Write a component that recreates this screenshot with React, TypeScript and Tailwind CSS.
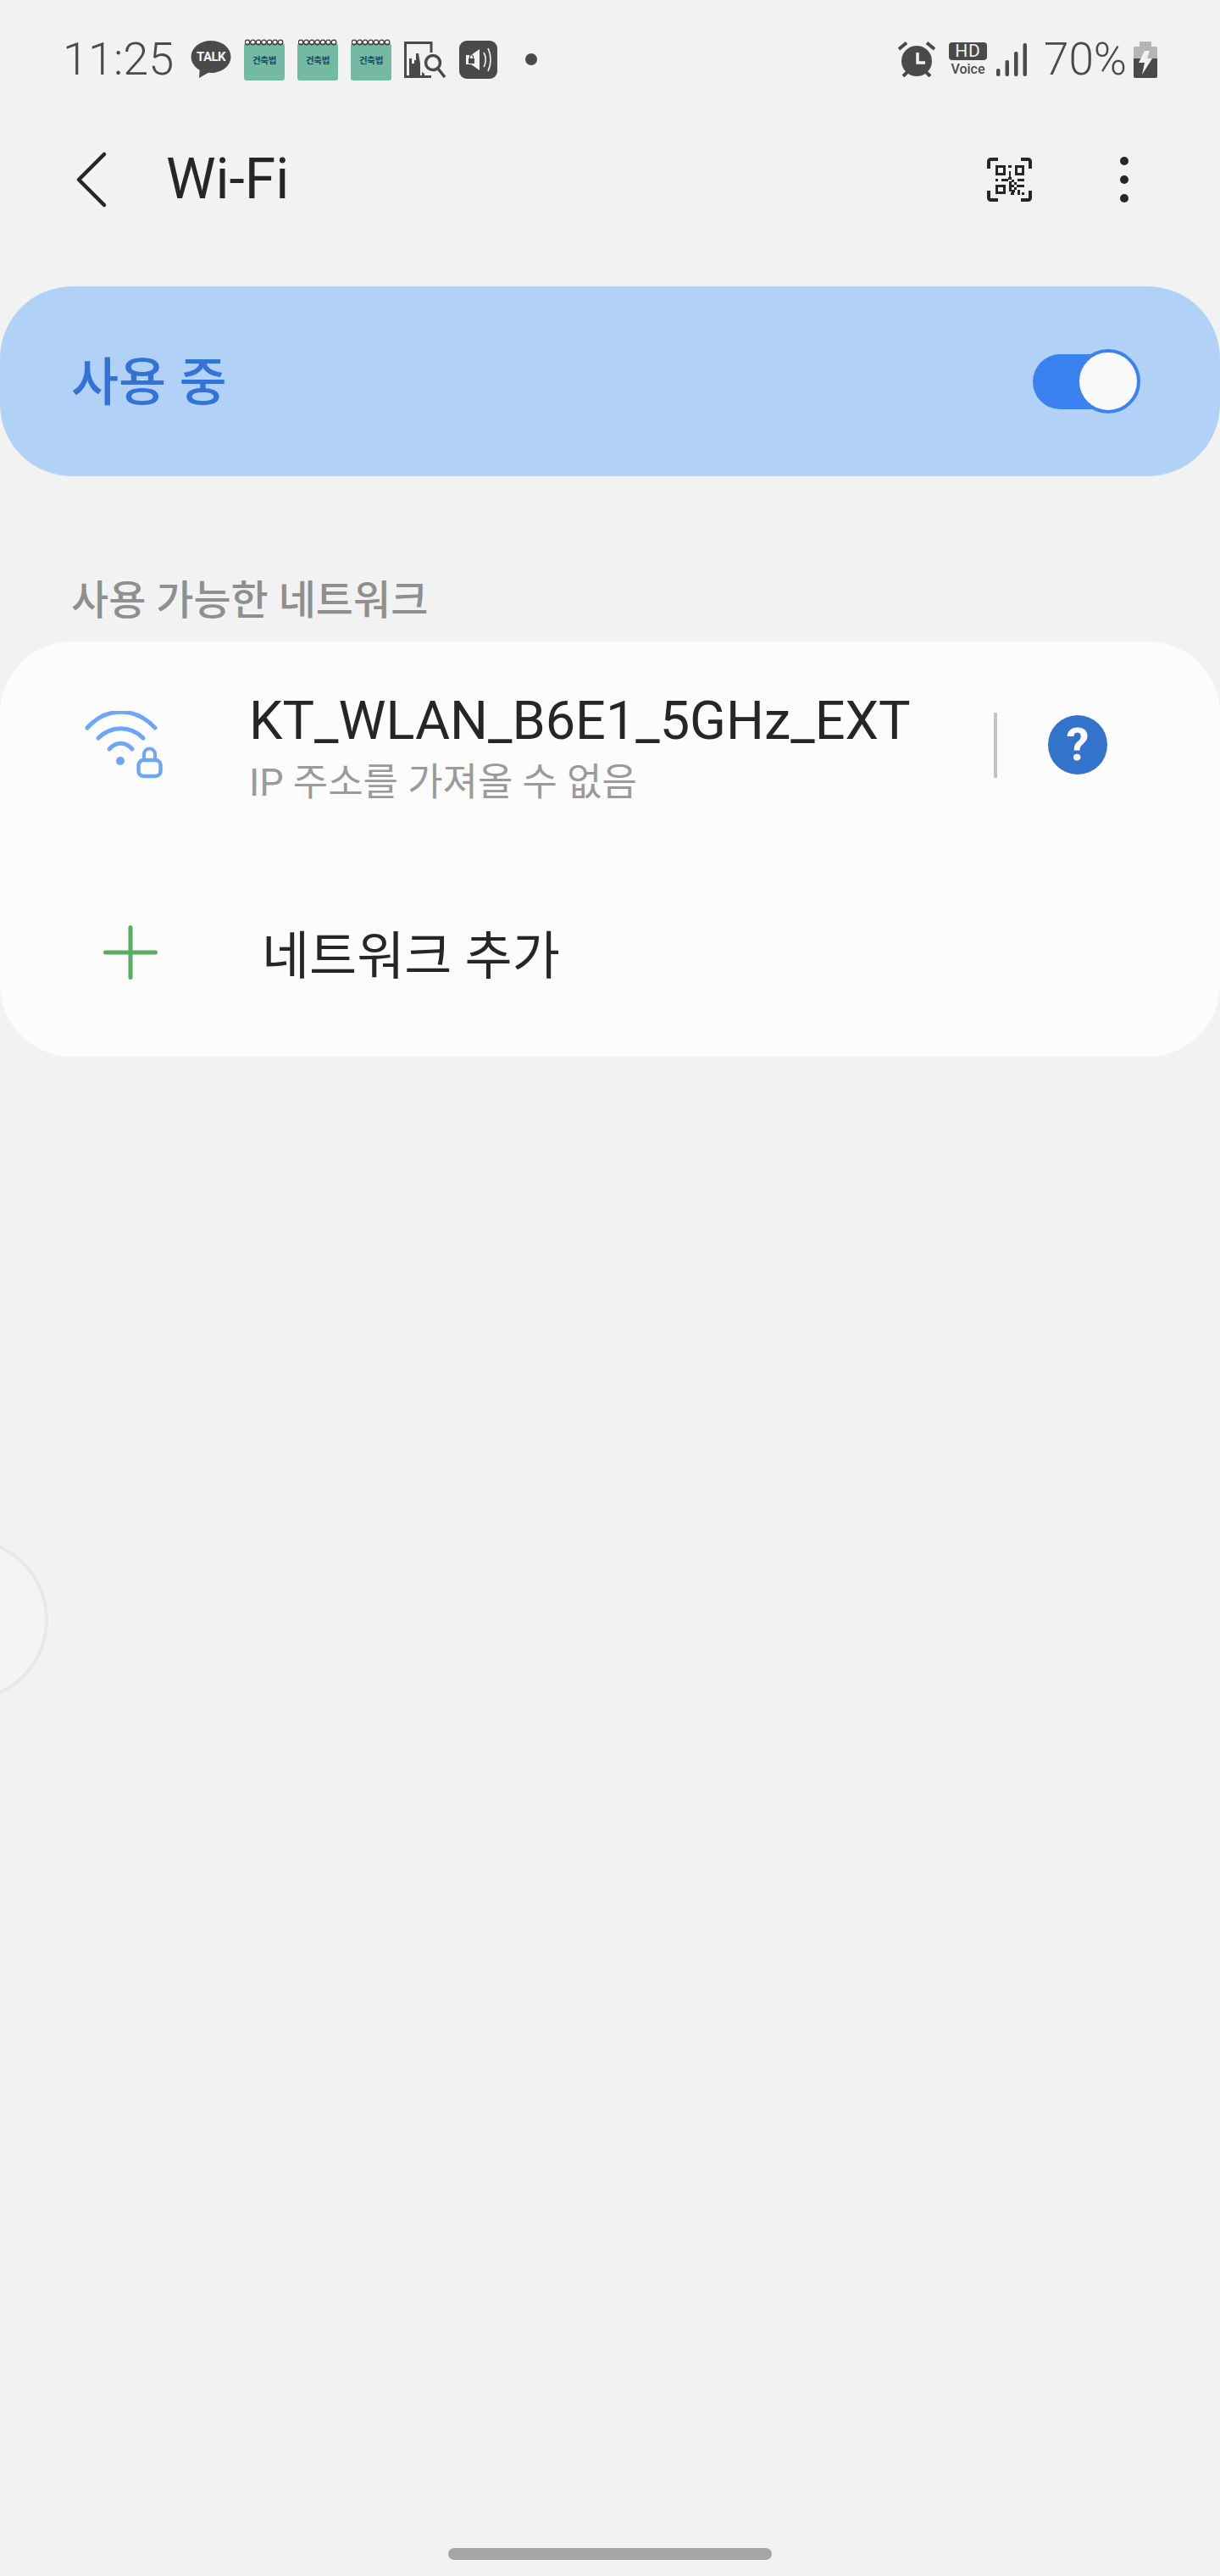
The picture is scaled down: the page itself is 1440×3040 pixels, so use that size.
const Notebook = () => (
  <div className="relative w-[48px] h-[49px] ml-[15px] first:ml-0">
    <div className="absolute left-0 right-0 top-[5px] bottom-0 rounded-[3px] bg-[#74b9a2]" />
    <svg className="absolute left-[1px] top-0" width="46" height="9" viewBox="0 0 46 9" fill="none">
      {[3, 9.5, 16, 22.5, 29, 35.5, 42].map((x) => (
        <circle key={x} cx={x} cy="4" r="2.8" stroke="#3a3a3a" strokeWidth="1.3" />
      ))}
    </svg>
    <span className="absolute inset-x-0 top-[18px] text-center text-[10.5px] leading-[15px] font-bold text-[#1c3f6e] tracking-[-0.3px]">
      건축법
    </span>
  </div>
);

const TalkIcon = () => (
  <div className="relative w-[48px] h-[44px]">
    <svg width="48" height="44" viewBox="0 0 48 44" fill="#4a4a4a">
      <ellipse cx="24" cy="19" rx="23.5" ry="19" />
      <path d="M11 30 L10 44 L24 36 Z" />
    </svg>
    <span className="absolute inset-x-0 top-[11px] text-center text-[15px] leading-[16px] font-bold text-[#f4f4f4] tracking-[-0.6px]">
      TALK
    </span>
  </div>
);

const ChartSearchIcon = () => (
  <svg width="50" height="43" viewBox="0 0 50 43" fill="none" className="ml-[15px]">
    <path d="M32 13V1.5H1.5V41.5H32" stroke="#4a4a4a" strokeWidth="3" />
    <path d="M6 42V20h3v6h3v-4l2 0v-8h3l2 12v16zM21 36l3 2v4h-3z" fill="#4a4a4a" />
    <circle cx="34" cy="25" r="8.5" stroke="#4a4a4a" strokeWidth="3.5" />
    <path d="M40 32l8 10" stroke="#4a4a4a" strokeWidth="3.5" />
  </svg>
);

const MediaLockIcon = () => (
  <div className="ml-[15px] w-[45px] h-[45px] rounded-[9px] bg-[#4a4a4a] flex items-center justify-center">
    <svg width="35" height="35" viewBox="0 0 35 35" fill="none">
      <path d="M3 12h6l10-7v25l-10-7H3z" fill="#f2f2f2" />
      <rect x="6" y="16" width="7" height="6" fill="#4a4a4a" />
      <path d="M7.5 16v-2a2 2 0 0 1 4 0v2" stroke="#4a4a4a" strokeWidth="1.2" />
      <path d="M24 9c3 5 3 12 0 17M29 4c4 8 4 19 0 27" stroke="#f2f2f2" strokeWidth="1.6" />
    </svg>
  </div>
);

const AlarmIcon = () => (
  <svg width="46" height="42" viewBox="0 0 46 42" fill="none">
    <circle cx="23" cy="23" r="18" fill="#4a4a4a" />
    <path d="M24 13v12h9" stroke="#f2f2f2" strokeWidth="3.5" />
    <path d="M2 9L11 1.5M44 9L35 1.5M7 41l5-5M39 41l-5-5" stroke="#4a4a4a" strokeWidth="4" />
  </svg>
);

const HdVoiceIcon = () => (
  <div className="ml-[15px] w-[45px] flex flex-col items-center">
    <div className="w-[45px] h-[21px] rounded-[4px] bg-[#4a4a4a] text-[#f2f2f2] text-[21px] leading-[21px] text-center tracking-[1px]">
      HD
    </div>
    <span className="mt-[1px] text-[16px] leading-[19px] font-medium text-[#4a4a4a]">Voice</span>
  </div>
);

const SignalIcon = () => (
  <svg width="36" height="39" viewBox="0 0 36 39" fill="#4a4a4a" className="ml-[11px]">
    <rect x="0" y="30" width="4.5" height="9" rx="2" />
    <rect x="10.5" y="20" width="4.5" height="19" rx="2" />
    <rect x="21" y="10" width="4.5" height="29" rx="2" />
    <rect x="31.5" y="0" width="4.5" height="39" rx="2" />
  </svg>
);

const BatteryIcon = () => (
  <svg width="28" height="43" viewBox="0 0 28 43" className="ml-[8px]">
    <rect x="7" y="0" width="14" height="8" rx="1" fill="#b5b5b5" />
    <path d="M2 6h24a2 2 0 0 1 2 2v13H0V8a2 2 0 0 1 2-2z" fill="#b5b5b5" />
    <path d="M0 20h28v21a2 2 0 0 1-2 2H2a2 2 0 0 1-2-2z" fill="#4a4a4a" />
    <path d="M13 11h6l-3 9h6L10 39l3-14H6z" fill="#f2f2f2" />
  </svg>
);

const BackIcon = () => (
  <svg width="40" height="70" viewBox="0 0 40 70" fill="none" stroke="#262626" strokeWidth="4.5" strokeLinecap="round" strokeLinejoin="round">
    <path d="M35 5L5 35L35 65" />
  </svg>
);

const QrIcon = () => (
  <svg width="53" height="52" viewBox="0 0 53 52" fill="#262626">
    <path d="M2 13V4.500A2.500 2.500 0 0 1 4.500 2H13M40 2H48.500A2.500 2.500 0 0 1 51 4.500V13M2 39V47.500A2.500 2.500 0 0 0 4.500 50H13M40 50H48.500A2.500 2.500 0 0 0 51 47.500V39" fill="none" stroke="#262626" strokeWidth="4" />
    <path fillRule="evenodd" d="M10 9h12v12H10zM13 12v6h6v-6zM33 9h11v12H33zM36 12v6h5v-6zM10 32h12v11H10zM13 35v5h6v-5z" />
    <path d="M25 9h4v3h-4zM26 16h2v8h-2zM10 25h3v3h-3zM17 25h8v3h-8zM25 23h4v3h-4zM29 26h3v3h-3zM36 25h8v3h-8zM26 28h3v12h-3zM32 29h3v3h-3zM29 32h3v3h-3zM35 32h9v3h-9zM32 35h3v3h-3zM29 38h4v3h-4zM36 38h3v3h-3zM28 41h4v3h-4zM36 41h3v3h-3zM41 41h3v3h-3z" />
  </svg>
);

const WifiLockIcon = () => (
  <svg width="92" height="80" viewBox="0 0 92 80" fill="none" stroke="#6ba6f8" strokeWidth="5" strokeLinecap="round">
    <path d="M3 20C25 -5 60 -5 83 20" />
    <path d="M16 32C31 17 54 17 69 32" />
    <path d="M29 45C37 36 48 36 56 45" />
    <circle cx="42" cy="59" r="5" fill="#6ba6f8" stroke="none" />
    <rect x="63.500" y="58" width="26" height="19" rx="6" strokeWidth="4.500" />
    <path d="M70 57v-6a6.500 6.500 0 0 1 13 0v6" strokeWidth="4" />
  </svg>
);

export default function App() {
  return (
    <div className="relative overflow-hidden min-h-[3040px] flex flex-col bg-[#f2f2f2] font-[Roboto,'Noto_Sans_CJK_KR',sans-serif] text-[#262626]">
      {/* status bar */}
      <div className="h-[140px] pl-[74px] pr-[74px] flex items-center justify-between text-[#4a4a4a]">
        <div className="flex items-center">
          <span className="text-[54px] leading-none font-light w-[135px] mr-[16px]">11:25</span>
          <TalkIcon />
          <div className="ml-[15px]">
            <div className="flex">
              <Notebook />
              <Notebook />
              <Notebook />
            </div>
          </div>
          <ChartSearchIcon />
          <MediaLockIcon />
          <div className="ml-[33px] w-[14px] h-[14px] rounded-full bg-[#4a4a4a]" />
        </div>
        <div className="flex items-center">
          <AlarmIcon />
          <HdVoiceIcon />
          <SignalIcon />
          <span className="ml-[20px] text-[53px] leading-none font-light">70%</span>
          <BatteryIcon />
        </div>
      </div>

      {/* toolbar */}
      <div className="h-[144px] flex items-center pl-[88px] pr-[108px]">
        <BackIcon />
        <h1 className="ml-[68px] text-[66px] leading-none font-normal">Wi-Fi</h1>
        <div className="ml-auto flex items-center gap-[104px]">
          <QrIcon />
          <div className="flex flex-col gap-[12px]">
            <div className="w-[10px] h-[10px] rounded-full bg-[#262626]" />
            <div className="w-[10px] h-[10px] rounded-full bg-[#262626]" />
            <div className="w-[10px] h-[10px] rounded-full bg-[#262626]" />
          </div>
        </div>
      </div>

      {/* master switch */}
      <div className="mt-[54px] h-[224px] rounded-[85px] bg-[#b1d1f6] flex items-center justify-between pl-[84px] pr-[94px]">
        <span className="pt-[4px] text-[61px] leading-none font-medium text-[#3373d6]">사용 중</span>
        <div className="relative w-[127px] h-[76px] flex items-center">
          <div className="w-[120px] h-[65px] rounded-full bg-[#3b82f1]" />
          <div className="absolute right-0 top-0 w-[76px] h-[76px] rounded-full bg-[#fafafa] border-4 border-[#3b82f1]" />
        </div>
      </div>

      <h2 className="mt-[120px] pl-[84px] text-[48px] leading-[54px] font-medium text-[#8f8f8f]">
        사용 가능한 네트워크
      </h2>

      {/* networks */}
      <div className="mt-[21px] rounded-[85px] bg-[#fcfcfc]">
        <div className="h-[244px] flex items-center pl-[100px] pr-[133px]">
          <WifiLockIcon />
          <div className="ml-[102px] pt-[7px] flex-1 min-w-0">
            <div className="-mt-[1px] text-[63px] leading-[74px]">KT_WLAN_B6E1_5GHz_EXT</div>
            <div className="mt-[10px] text-[45px] leading-[52px] text-[#9a9a9a]">IP 주소를 가져올 수 없음</div>
          </div>
          <div className="w-[4px] h-[77px] bg-[#c4c4c4]" />
          <div className="ml-[60px] w-[70px] h-[70px] rounded-full bg-[#3373cc] flex items-center justify-center text-[54px] font-bold leading-none text-[#fcfcfc]">
            ?
          </div>
        </div>
        <div className="h-[246px] flex items-center pl-[122px]">
          <svg width="64" height="64" viewBox="0 0 64 64" stroke="#57ae60" strokeWidth="5" strokeLinecap="round">
            <path d="M32 2.500V61.500M2.500 32H61.500" />
          </svg>
          <span className="ml-[123px] pt-[10px] text-[61px] leading-none">네트워크 추가</span>
        </div>
      </div>

      <div className="flex-1" />

      {/* home indicator */}
      <div className="mb-[19px] mx-auto w-[382px] h-[14px] rounded-full bg-[#a6a6a6]" />

      {/* side handle, cut off by the screen edge */}
      <div className="absolute left-[-136px] top-[1815px] w-[193px] h-[193px] rounded-full bg-[#f4f4f4] border-4 border-[#e8e8e8]" />
    </div>
  );
}
